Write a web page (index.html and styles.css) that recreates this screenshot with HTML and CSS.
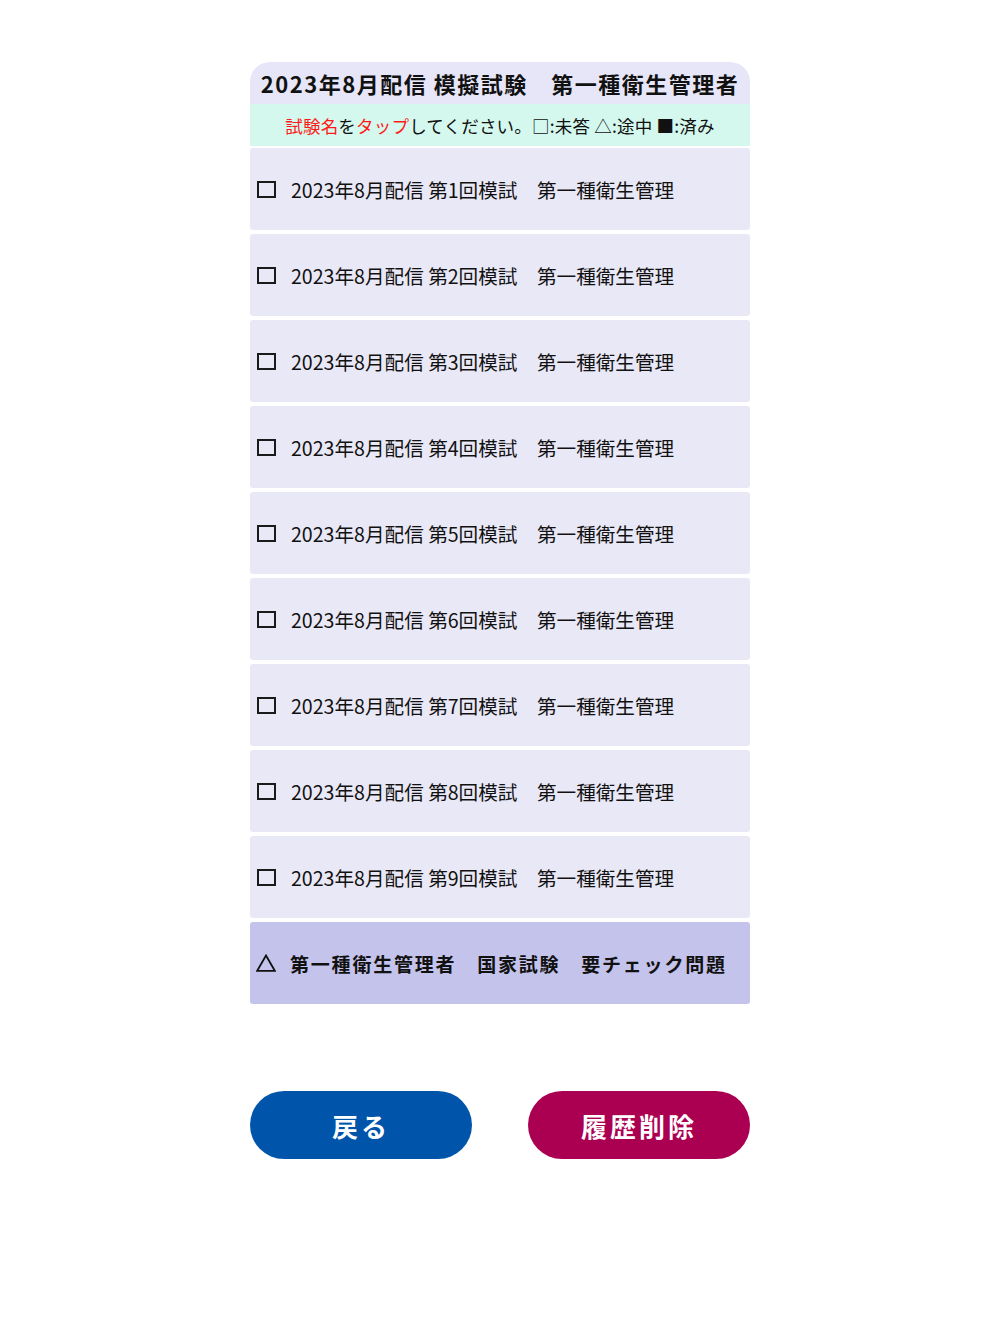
FILE: index.html
```html
<!DOCTYPE html>
<html>
  <head>
    <meta charset="utf-8">
    <meta name="viewport" content="width=device-width, initial-scale=1.0">
    <title>模擬試験 一覧</title>
    <link rel="stylesheet" href="styles.css">
  </head>
  <body>
    <div class="panel">
      <!-- タイトル -->
      <div class="panel-title">2023年8月配信 模擬試験　第一種衛生管理者</div>
      <div class="panel-hint">
        <span class="red">試験名</span>を<span class="red">タップ</span>してください。□:未答 △:途中 ■:済み
      </div>
      <!-- 試験リスト -->
      <div class="exam-list">
        <div class="exam-row"><span class="box"></span><span>2023年8月配信 第1回模試　第一種衛生管理</span></div>
        <div class="exam-row"><span class="box"></span><span>2023年8月配信 第2回模試　第一種衛生管理</span></div>
        <div class="exam-row"><span class="box"></span><span>2023年8月配信 第3回模試　第一種衛生管理</span></div>
        <div class="exam-row"><span class="box"></span><span>2023年8月配信 第4回模試　第一種衛生管理</span></div>
        <div class="exam-row"><span class="box"></span><span>2023年8月配信 第5回模試　第一種衛生管理</span></div>
        <div class="exam-row"><span class="box"></span><span>2023年8月配信 第6回模試　第一種衛生管理</span></div>
        <div class="exam-row"><span class="box"></span><span>2023年8月配信 第7回模試　第一種衛生管理</span></div>
        <div class="exam-row"><span class="box"></span><span>2023年8月配信 第8回模試　第一種衛生管理</span></div>
        <div class="exam-row"><span class="box"></span><span>2023年8月配信 第9回模試　第一種衛生管理</span></div>
        <div class="exam-row check">
          <svg class="tri" width="20" height="18" viewBox="0 0 20 18"><path d="M10 1.5 L18.8 16.8 H1.2 Z" fill="none" stroke="#111" stroke-width="1.8" stroke-linejoin="miter"/></svg>
          <span>第一種衛生管理者　国家試験　要チェック問題</span>
        </div>
      </div>
    </div>
    <div class="buttons">
      <button class="btn btn-back">戻る</button>
      <button class="btn btn-clear">履歴削除</button>
    </div>
  </body>
</html>
```

FILE: styles.css
```css
body {
  margin: 0;
  background: #ffffff;
  color: #111111;
  font-family: "Noto Sans CJK JP", "Noto Sans", sans-serif;
}
/* 一覧パネル */
.panel {
  width: 500px;
  margin: 62px auto 0;
}
.panel-title {
  background-color: #e6e6f8;
  border-radius: 20px 20px 0 0;
  height: 42px;
  display: flex;
  align-items: center;
  justify-content: center;
  font-size: 22px;
  font-weight: bold;
  letter-spacing: 1.5px;
}
.panel-hint {
  background-color: #d4f8ee;
  height: 42px;
  display: flex;
  align-items: center;
  justify-content: center;
  font-size: 17.5px;
  letter-spacing: 0.2px;
}
.red {
  color: #ff1a1a;
}
.exam-list {
  display: flex;
  flex-direction: column;
  gap: 4px;
  margin-top: 2px;
}
.exam-row {
  background-color: #e9e8f7;
  border-radius: 3px;
  height: 82px;
  display: flex;
  align-items: center;
  gap: 15px;
  padding-left: 7px;
  font-size: 19.6px;
  cursor: pointer;
}
/* 未答の四角 */
.box {
  width: 15px;
  height: 13px;
  border: 2px solid #1a1a1a;
  margin-top: 1px;
}
.tri {
  margin-left: -1px;
  margin-right: -1px;
}
.exam-row.check {
  background-color: #c4c3eb;
  font-size: 19px;
  font-weight: bold;
  letter-spacing: 1.8px;
}
/* ボタン */
.buttons {
  width: 500px;
  margin: 87px auto 0;
  display: flex;
  justify-content: space-between;
}
.btn {
  width: 222px;
  height: 68px;
  border: none;
  border-radius: 34px;
  color: white;
  font-family: inherit;
  font-size: 26px;
  font-weight: bold;
  letter-spacing: 3px;
  cursor: pointer;
}
.btn-back {
  background-color: #0055ab;
}
.btn-clear {
  background-color: #ab0052;
}
```
